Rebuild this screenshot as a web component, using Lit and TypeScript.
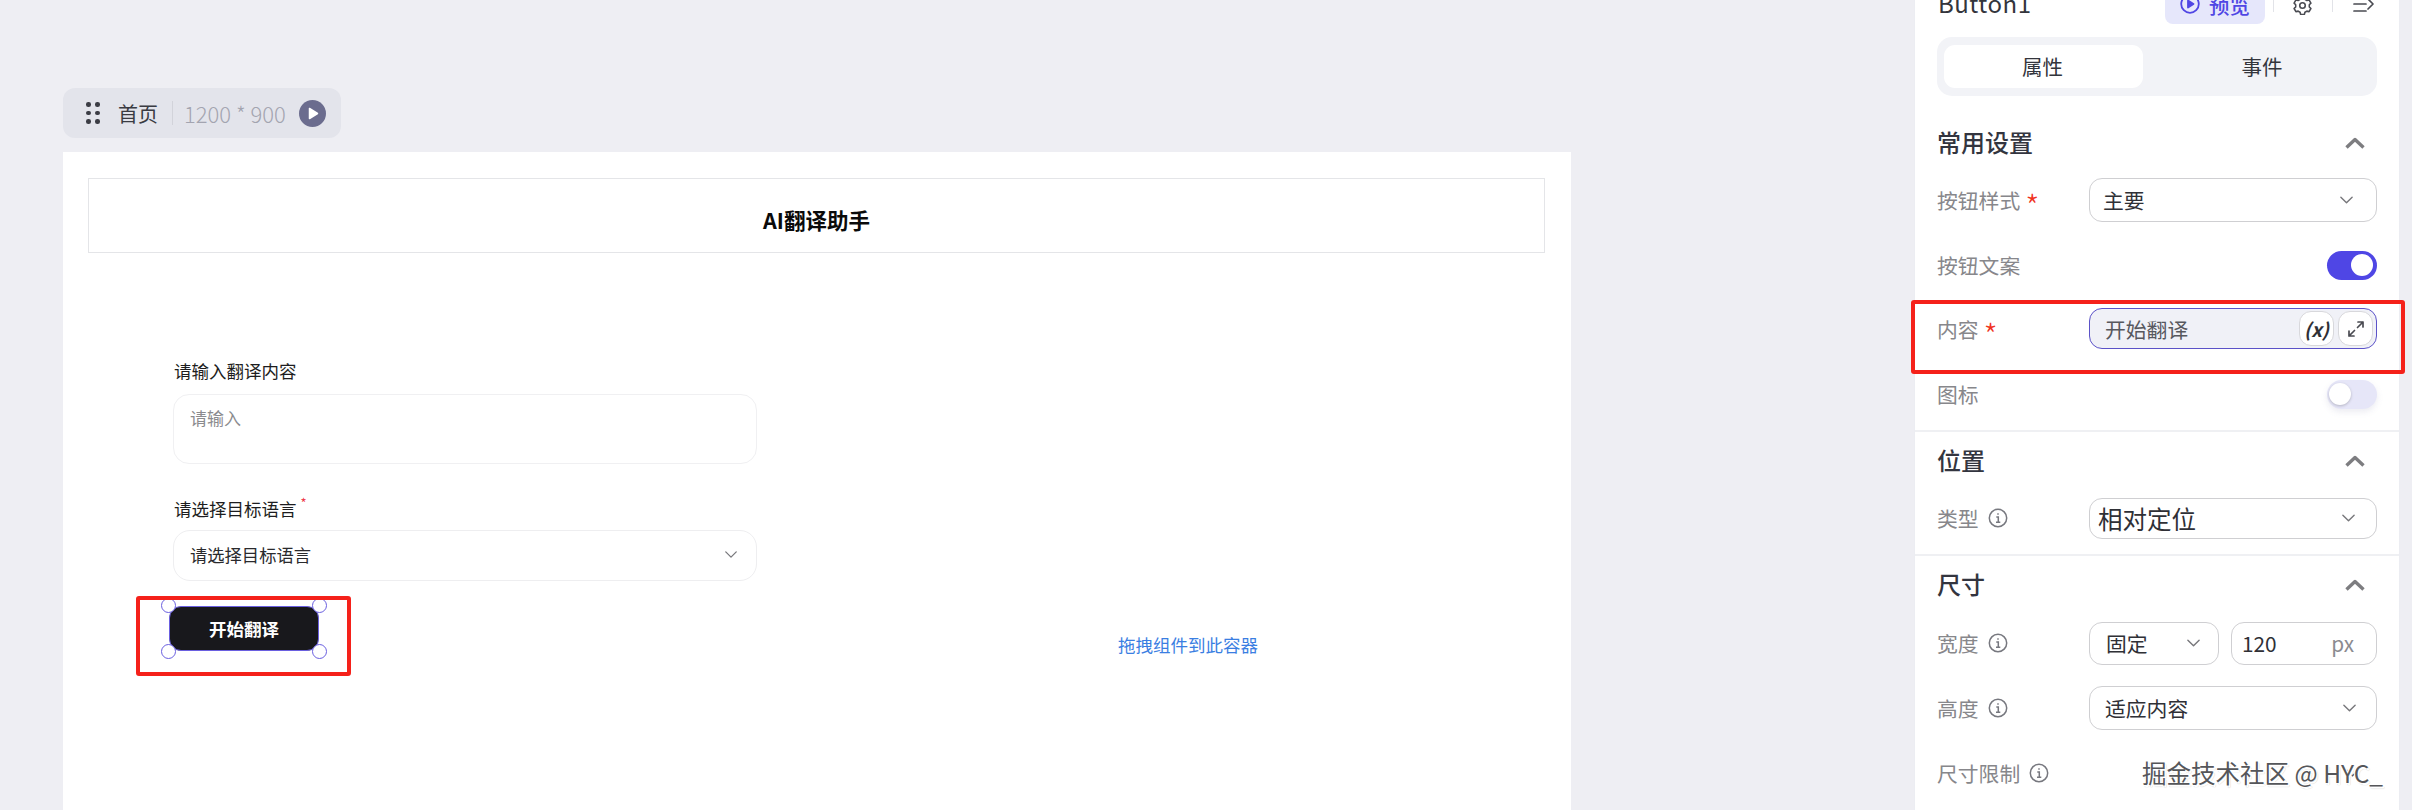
import { LitElement, html, css } from "lit";
import { customElement } from "lit/decorators.js";

const chevron = (cls = "chev") => html`<svg class=${cls} viewBox="0 0 16 10" fill="none" stroke="currentColor" stroke-width="1.5" stroke-linecap="round" stroke-linejoin="round"><path d="M2 2l6 6 6-6" /></svg>`;
const up = html`<svg class="up" viewBox="0 0 20 12" fill="none" stroke="#7d7d80" stroke-width="3.4" stroke-linejoin="round"><path d="M1.5 10.5 10 2.5l8.500 8" /></svg>`;
const info = html`<svg class="info" viewBox="0 0 20 20" fill="none" stroke="#77787f" stroke-width="1.5"><circle cx="10" cy="10" r="8.700" /><path d="M8.300 9h2v5M8 14.200h4.300M10 5.300v1.500" /></svg>`;

@customElement("app-root")
export class AppRoot extends LitElement {
  static styles = css`
    :host {
      display: flex;
      position: relative;
      width: 2412px;
      height: 810px;
      overflow: hidden;
      background: #eeeef3;
      font-family: "Noto Sans CJK SC", "Noto Sans", sans-serif;
      color: #2f3138;
    }
    * { box-sizing: border-box; }
    .stage { flex: 0 0 1915px; padding: 88px 0 0 63px; }
    .tab {
      display: flex; align-items: center; width: 278px; height: 50px;
      margin-bottom: 14px; padding-left: 23px;
      background: #e3e4eb; border-radius: 12px; font-size: 20px; color: #3a3b42;
    }
    .dots { display: grid; grid-template-columns: 4px 4px; gap: 4px 5px; margin-right: 19px; }
    .dots i { width: 4.500px; height: 4.500px; border-radius: 50%; background: #3b3c44; }
    .tabname { width: 41px; white-space: nowrap; }
    .tabsep { width: 1px; height: 24px; background: #d2d3da; margin: 0 11px 0 13px; }
    .tabsize { color: #a3a4b0; font-weight: 300; font-size: 22px; width: 103px; white-space: nowrap; margin-right: 12px; }
    .playbtn { width: 27px; height: 27px; }
    .canvas { width: 1508px; height: 658px; background: #fff; padding: 26px 26px 0 25px; }
    .head {
      height: 75px; border: 1.5px solid #e4e5e8; display: flex; align-items: center; justify-content: center;
      font-size: 21.500px; font-weight: 700; color: #0a0a0a; padding: 7px 0 0 0; margin-bottom: 106px;
    }
    .form { padding-left: 85px; }
    .flabel { font-size: 17.500px; line-height: 24px; color: #1d1d20; position: relative; margin-left: 1px; }
    .star-small { color: #ee3b4a; font-size: 13px; position: relative; top: -8px; left: 4px; line-height: 1; }
    .area {
      width: 584px; height: 70px; margin-top: 11px; margin-bottom: 33px; padding: 10.500px 16px;
      border: 1.500px solid #f0f0f2; border-radius: 16px; font-size: 17px; line-height: 24px; color: #8b8b8e;
    }
    .sel {
      display: flex; align-items: center; justify-content: space-between;
      width: 584px; height: 51px; margin-top: 9px; padding: 0 16px 2px 16px;
      border: 1.500px solid #eeeef0; border-radius: 17px; font-size: 17.300px; color: #2a2a2d;
    }
    .sel .chev { width: 14px; height: 9px; color: #77777b; margin-right: 2px; }
    .btnrow { display: flex; align-items: flex-start; margin-top: 25px; margin-left: -4px; }
    .run {
      position: relative; width: 150px; height: 45px; background: #18181c; border: 1.500px solid #6a5fe0; border-radius: 12px;
      display: flex; align-items: center; justify-content: center; color: #fff; font-weight: 700; font-size: 17.500px;
    }
    .h { position: absolute; width: 15px; height: 15px; border-radius: 50%; background: #fff; border: 1.500px solid #6a5fe0; }
    .tl { left: -9px; top: -9px; } .tr { right: -9px; top: -9px; }
    .bl { left: -9px; bottom: -9px; } .br { right: -9px; bottom: -9px; }
    .drop { margin-left: 799px; color: #3a7ee2; font-size: 17.500px; white-space: nowrap; margin-top: 26px; }

    .panel { flex: 0 0 484px; background: #fff; padding: 0 22px; border-left: 1px solid #ecedf2; border-right: 1px solid #ecedf2; margin-left: -1px; }
    .top { height: 24px; position: relative; }
    .bname { font-size: 24px; line-height: 24px; position: absolute; left: 1px; top: -9px; color: #33353c; letter-spacing: 0.5px; }
    .preview {
      position: absolute; left: 228px; top: -10px; width: 100px; height: 34px; border-radius: 8px; background: #e6e7fb; color: #5046e4;
      font-size: 20.500px; font-weight: 500; line-height: 24px; display: flex; align-items: flex-start; gap: 9px; padding: 3px 0 0 15px;
    }
    .preview svg { width: 20px; height: 20px; flex: none; margin-top: 1px; }
    .vsep { position: absolute; top: 0; width: 1px; height: 12px; background: #e2e3e8; }
    .v1 { left: 336px; } .v2 { left: 395px; }
    .gear { position: absolute; left: 356px; top: -4px; width: 19px; height: 19px; }
    .collapse { position: absolute; left: 416px; top: -2px; width: 21px; height: 15px; }
    .tabs { margin-top: 13px; height: 59px; padding: 8px 7px; border-radius: 15px; background: #f2f3f7; display: flex; font-size: 20.500px; }
    .tabs div { flex: 0 0 199px; display: flex; align-items: center; justify-content: center; border-radius: 11px; color: #33353c; padding: 0 2px 2px 0; }
    .tabs .on { background: #fff; }
    .tabs div + div { flex: 1; padding-left: 13px; }
    .sec { height: 40px; display: flex; align-items: center; justify-content: space-between; font-size: 24px; font-weight: 500; color: #33353f; padding: 0 12px 6px 0; margin-top: 28px; }
    .sec.next { margin-top: 11px; }
    .up { width: 20px; height: 12px; margin-top: 3px; }
    .row { display: grid; grid-template-columns: 152px 288px; align-items: center; font-size: 20.800px; color: #87878b; }
    .lab { display: flex; align-items: center; white-space: nowrap; }
    .req { color: #f0341f; margin-left: 5px; font-size: 32px; font-weight: 300; line-height: 20px; position: relative; top: 5px; }
    .info { width: 20px; height: 20px; margin-left: 9px; }
    .box {
      display: flex; align-items: center; justify-content: space-between; border: 1.300px solid #cfcfd2; border-radius: 13px;
      color: #2f3036; background: #fff; white-space: nowrap;
    }
    .box .chev { color: #77777b; width: 15px; height: 10px; }
    .r1 { margin-top: 14px; }
    .r1 .box { height: 44px; padding: 0 22px 0 13px; }
    .r2 { margin-top: 21px; height: 44px; }
    .r3 { margin-top: 21px; }
    .r4 { height: 44px; margin-top: 23px; }
    .toggle { grid-column: 2; justify-self: end; width: 50px; height: 29px; border-radius: 15px; background: #4f46e5; position: relative; }
    .toggle i { position: absolute; right: 4px; top: 3.500px; width: 22px; height: 22px; border-radius: 50%; background: #fff; }
    .toggle.off { background: #e6e6f8; box-shadow: 0 3px 6px rgba(120,120,160,.14); }
    .toggle.off i { left: 2px; right: auto; box-shadow: 0 1px 3px rgba(0,0,0,.22); }
    .edit {
      height: 41px; display: flex; align-items: center; justify-content: space-between; padding: 0 3px 0 15px;
      background: #f0f1f7; border: 1.500px solid #5b52c8; border-radius: 13px; color: #57585e;
    }
    .mini {
      width: 35px; height: 35px; border: 1.200px solid #d8d8dc; border-radius: 12px; background: #fff; display: flex; align-items: center; justify-content: center;
      color: #2f3036; font-size: 19px; font-weight: 700; font-style: italic; margin-left: 4px;
    }
    .mini svg { width: 20px; height: 20px; }
    .minis { display: flex; }
    .hr { height: 1.500px; background: #eff0f3; margin: 14px -22px 0; }
    .hr2 { margin-top: 15.500px; }
    .r5 { margin-top: 15px; }
    .r5 .box { height: 41px; padding: 0 20px 0 8px; font-size: 24.500px; }
    .r6 { margin-top: 15px; }
    .split { display: grid; grid-template-columns: 130px 146px; gap: 12px; }
    .split .box { height: 43px; }
    .split .fix { padding: 0 17px 0 16px; }
    .split .num { padding: 0 22px 0 10px; }
    .px { color: #8b8b90; }
    .r7 { margin-top: 21px; }
    .r7 .box { height: 44px; padding: 0 19px 0 15px; }
    .r8 { margin-top: 22px; height: 42px; }
    .r8 .chev { grid-column: 2; justify-self: end; width: 15px; height: 10px; margin-right: 17px; color: #55565a; }

    .mark { position: absolute; border: 4px solid #f5211a; border-radius: 3px; pointer-events: none; }
    .m1 { left: 136px; top: 596px; width: 215px; height: 80px; }
    .m2 { left: 1911px; top: 300px; width: 494px; height: 74px; }
    .wm {
      position: absolute; left: 2142px; top: 755px; font-size: 24.500px; line-height: 36px; color: #55565a; white-space: nowrap;
      text-shadow: 1.500px 1.500px 0 #fff, -1px -1px 0 #fff, 1px -1px 0 #fff, -1px 1px 0 #fff, 1.500px 1.500px 1px #bbb;
    }
  `;

  render() {
    return html`
      <div class="stage">
        <div class="tab">
          <div class="dots"><i></i><i></i><i></i><i></i><i></i><i></i></div>
          <span class="tabname">首页</span><span class="tabsep"></span>
          <span class="tabsize">1200 * 900</span>
          <svg class="playbtn" viewBox="0 0 27 27"><circle cx="13.500" cy="13.500" r="13.500" fill="#6b6c8e" /><path d="M10.500 8.500v10l8-5z" fill="#fff" stroke="#fff" stroke-width="1.500" stroke-linejoin="round" /></svg>
        </div>
        <div class="canvas">
          <div class="head">AI翻译助手</div>
          <div class="form">
            <div class="flabel">请输入翻译内容</div>
            <div class="area">请输入</div>
            <div class="flabel">请选择目标语言<span class="star-small">*</span></div>
            <div class="sel"><span>请选择目标语言</span>${chevron()}</div>
            <div class="btnrow">
              <div class="run">开始翻译
                <i class="h tl"></i><i class="h tr"></i><i class="h bl"></i><i class="h br"></i>
              </div>
              <div class="drop">拖拽组件到此容器</div>
            </div>
          </div>
        </div>
      </div>

      <div class="panel">
        <div class="top">
          <span class="bname">Button1</span>
          <div class="preview">
            <svg viewBox="0 0 20 20" fill="none" stroke="#5046e4" stroke-width="1.800"><circle cx="10" cy="10" r="8.800" /><path d="M8 6.500v7l5.500-3.500z" fill="#5046e4" stroke-linejoin="round" /></svg>
            预览
          </div>
          <span class="vsep v1"></span>
          <svg class="gear" viewBox="0 0 24 24" fill="none" stroke="#4a4b52" stroke-width="2" stroke-linejoin="round"><path d="M9.700 2.500h4.600l.8 2.800 2.400 1.400 2.800-.7 2.300 4-2 2 0 2.800 2 2-2.300 4-2.800-.7-2.400 1.400-.8 2.800H9.700l-.8-2.800-2.400-1.400-2.800.7-2.300-4 2-2v-2.800l-2-2 2.300-4 2.800.7 2.400-1.400z" transform="translate(0 -1)" /><circle cx="12" cy="12" r="3.500" /></svg>
          <span class="vsep v2"></span>
          <svg class="collapse" viewBox="0 0 21 15" fill="none" stroke="#4a4b52" stroke-width="1.700" stroke-linecap="round" stroke-linejoin="round"><path d="M1 6h12M1 13h12M15 1l5 5-5 5" /></svg>
        </div>
        <div class="tabs"><div class="on">属性</div><div>事件</div></div>

        <div class="sec">常用设置${up}</div>
        <div class="row r1"><span class="lab">按钮样式<span class="req">*</span></span><div class="box">主要${chevron()}</div></div>
        <div class="row r2"><span class="lab">按钮文案</span><div class="toggle"><i></i></div></div>
        <div class="row r3"><span class="lab">内容<span class="req">*</span></span>
          <div class="edit"><span>开始翻译</span>
            <div class="minis">
              <div class="mini">(x)</div>
              <div class="mini"><svg viewBox="0 0 20 20" fill="none" stroke="#4a4b52" stroke-width="1.700" stroke-linecap="round" stroke-linejoin="round"><path d="M11.500 8.500 17 3M12 3h5v5M8.500 11.500 3 17M3 12v5h5" /></svg></div>
            </div>
          </div>
        </div>
        <div class="row r4"><span class="lab">图标</span><div class="toggle off"><i></i></div></div>
        <div class="hr"></div>

        <div class="sec next">位置${up}</div>
        <div class="row r5"><span class="lab">类型${info}</span><div class="box">相对定位${chevron()}</div></div>
        <div class="hr hr2"></div>

        <div class="sec next">尺寸${up}</div>
        <div class="row r6"><span class="lab">宽度${info}</span>
          <div class="split">
            <div class="box fix">固定${chevron()}</div>
            <div class="box num">120<span class="px">px</span></div>
          </div>
        </div>
        <div class="row r7"><span class="lab">高度${info}</span><div class="box">适应内容${chevron()}</div></div>
        <div class="row r8"><span class="lab">尺寸限制${info}</span>${chevron()}</div>
      </div>

      <div class="mark m1"></div>
      <div class="mark m2"></div>
      <div class="wm">掘金技术社区 @ HYC_</div>
    `;
  }
}
